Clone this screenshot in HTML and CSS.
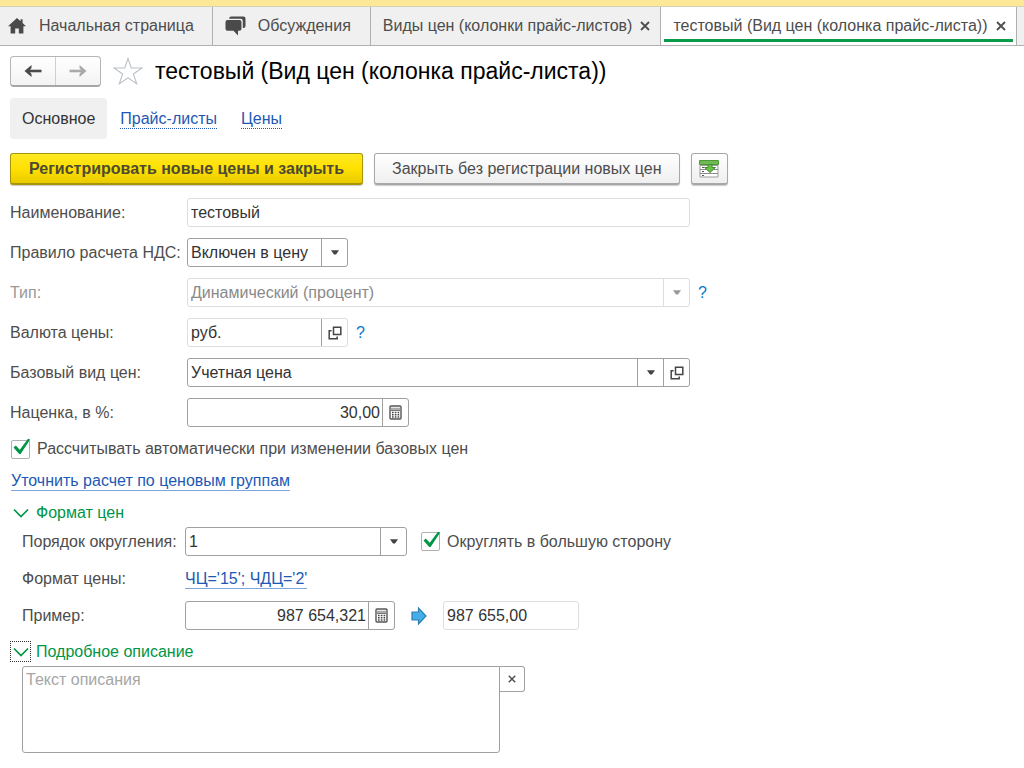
FILE: index.html
```html
<!DOCTYPE html>
<html lang="ru">
<head>
<meta charset="utf-8">
<title>тестовый (Вид цен (колонка прайс-листа))</title>
<meta name="viewport" content="width=device-width, initial-scale=1">
<link rel="stylesheet" href="styles.css">
</head>
<body>
<svg class="sprite" aria-hidden="true">
  <symbol id="i-down" viewBox="0 0 8 5"><path d="M0 0.300h8L5 4.500H3z" fill="currentColor"/></symbol>
  <symbol id="i-open" viewBox="0 0 14 14"><path d="M5.500 1.200h7.300v7.300H5.500zM3.600 4.800H1.200v8h8v-2.300" fill="none" stroke="currentColor" stroke-width="1.500"/></symbol>
  <symbol id="i-calc" viewBox="0 0 13 15"><rect x="1" y="1" width="11" height="13" rx="1" fill="#fff" stroke="#555" stroke-width="1.4"/><path d="M2 3.700h9" stroke="#aaa" stroke-width="2"/><path d="M2 5.300h9" stroke="#555"/><path d="M3 7.500h7.400M3 9.800h7.400M3 12h7.400" stroke="#444" stroke-width="1.400" stroke-dasharray="1.6 1.2"/></symbol>
  <symbol id="i-close" viewBox="0 0 10 10"><path d="M1 1l8 8M9 1L1 9" stroke="currentColor" stroke-width="1.8"/></symbol>
  <symbol id="i-chevron" viewBox="0 0 16 10"><path d="M1 1.5l7 7 7-7" fill="none" stroke="currentColor" stroke-width="1.7"/></symbol>
  <symbol id="i-tick" viewBox="0 0 19 19"><path d="M1.500 9.500l2.300-2 4 4.300L16 .8l2.200.7L8.600 16H7.200z" fill="#009646"/></symbol>
</svg>
<div class="strip"></div>
<nav class="tabs" aria-label="Открытые окна">
  <div class="tab tab-home"><svg width="18" height="16" viewBox="0 0 18 16"><path d="M9 0L0 8.2h2.6V15.5h4.6v-5h3.6v5h4.6V8.2H18L14.6 5V1.2h-2v2z" fill="#4a4a4a"/></svg><button type="button">Начальная страница</button></div>
  <div class="tab tab-talk"><svg width="21" height="20" viewBox="0 0 21 20"><path d="M6 0.5h12.500a2 2 0 0 1 2 2v7.500a2 2 0 0 1-2 2h-.7V5a2.200 2.200 0 0 0-2.200-2.200H4.200A2 2 0 0 1 6 .5z" fill="#4a4a4a"/><path d="M2.500 4h12a2 2 0 0 1 2 2v6.800a2 2 0 0 1-2 2h-1.500V19.500l-4.500-4.700H2.500a2 2 0 0 1-2-2V6a2 2 0 0 1 2-2z" fill="#4a4a4a"/></svg><button type="button">Обсуждения</button></div>
  <div class="tab tab-list"><button type="button">Виды цен (колонки прайс-листов)</button><button type="button" aria-label="Закрыть вкладку"><svg width="10" height="10"><use href="#i-close"/></svg></button></div>
  <div class="tab active"><button type="button">тестовый (Вид цен (колонка прайс-листа))</button><button type="button" aria-label="Закрыть вкладку"><svg width="10" height="10"><use href="#i-close"/></svg></button></div>
</nav>
<main class="page">
  <header class="heading">
    <div class="history">
      <button type="button" aria-label="Назад"><svg width="18" height="12" viewBox="0 0 18 12"><path d="M3 6h14.500" stroke="#4a4a4a" stroke-width="2.600"/><path d="M7.500 0L.5 6l7 6V9L5 6l2.500-3z" fill="#4a4a4a"/></svg></button>
      <button type="button" aria-label="Вперед"><svg width="18" height="12" viewBox="0 0 18 12"><path d="M15 6H.5" stroke="#a9a9a9" stroke-width="2.600"/><path d="M10.500 0l7 6-7 6V9L13 6l-2.500-3z" fill="#a9a9a9"/></svg></button>
    </div>
    <button type="button" class="star" aria-label="В избранное"><svg width="30" height="28" viewBox="0 0 30 28"><path d="M15 1.500l3.300 9.500H29l-8.600 6 3.300 9.800L15 20.800l-8.700 6L9.600 17 1 11h10.700z" fill="#fff" stroke="#b9c0c8" stroke-width="1.100"/></svg></button>
    <h1>тестовый (Вид цен (колонка прайс-листа))</h1>
  </header>
  <nav class="sections" aria-label="Разделы">
    <span class="current">Основное</span>
    <a href="#prices">Прайс-листы</a>
    <a href="#values">Цены</a>
  </nav>
  <div class="commands">
    <button type="button" class="btn primary">Регистрировать новые цены и закрыть</button>
    <button type="button" class="btn">Закрыть без регистрации новых цен</button>
    <button type="button" class="btn icon" aria-label="Загрузить"><svg width="20" height="18" viewBox="0 0 20 18"><path d="M1 5.500h18v11.500H1z" fill="#fff" stroke="#9a9a9a"/><path d="M1 9.500h18M1 13.500h18" stroke="#8c8c8c"/><path d="M3 7.500h2M3 11.500h2M3 15.500h2" stroke="#555"/><path d="M.5.500h19v4H.5z" fill="#6fb954" stroke="#4c9a36"/><path d="M9 4.500h4v3h3.500L11 12.500l-5.500-5H9z" fill="#6cc04a" stroke="#3f8f2c"/></svg></button>
  </div>
  <form class="form">
    <div class="row"><label for="name">Наименование:</label><div class="field wide soft"><input id="name" value="тестовый"></div></div>
    <div class="row"><label for="vat">Правило расчета НДС:</label><div class="field short"><select id="vat"><option>Включен в цену</option></select><span class="end"><svg width="8" height="5"><use href="#i-down"/></svg></span></div></div>
    <div class="row off"><label for="type">Тип:</label><div class="field wide soft"><select id="type" disabled><option>Динамический (процент)</option></select><span class="end"><svg width="8" height="5"><use href="#i-down"/></svg></span></div><button type="button" class="help">?</button></div>
    <div class="row"><label for="cur">Валюта цены:</label><div class="field short soft"><input id="cur" value="руб."><button type="button" class="end dark" aria-label="Открыть"><svg width="14" height="14"><use href="#i-open"/></svg></button></div><button type="button" class="help">?</button></div>
    <div class="row"><label for="base">Базовый вид цен:</label><div class="field wide"><select id="base"><option>Учетная цена</option></select><span class="end"><svg width="8" height="5"><use href="#i-down"/></svg></span><button type="button" class="end" aria-label="Открыть"><svg width="14" height="14"><use href="#i-open"/></svg></button></div></div>
    <div class="row"><label for="markup">Наценка, в %:</label><div class="field medium"><input id="markup" class="num" value="30,00"><button type="button" class="end" aria-label="Калькулятор"><svg width="13" height="15"><use href="#i-calc"/></svg></button></div></div>
    <label class="check"><input type="checkbox" checked><svg class="tick" width="19" height="19"><use href="#i-tick"/></svg>Рассчитывать автоматически при изменении базовых цен</label>
    <a class="link refine" href="#groups">Уточнить расчет по ценовым группам</a>
    <section>
      <h2><button type="button" class="toggle" aria-label="Свернуть"><svg width="16" height="10"><use href="#i-chevron"/></svg></button>Формат цен</h2>
      <div class="group">
        <div class="row"><label for="round">Порядок округления:</label><div class="field medium"><select id="round"><option>1</option></select><span class="end"><svg width="8" height="5"><use href="#i-down"/></svg></span></div><label class="check side"><input type="checkbox" checked><svg class="tick" width="19" height="19"><use href="#i-tick"/></svg>Округлять в большую сторону</label></div>
        <div class="row low"><span class="caption">Формат цены:</span><a class="link" href="#format">ЧЦ='15'; ЧДЦ='2'</a></div>
        <div class="row"><label for="sample">Пример:</label><div class="field sample"><input id="sample" class="num" value="987 654,321"><button type="button" class="end" aria-label="Калькулятор"><svg width="13" height="15"><use href="#i-calc"/></svg></button></div><svg class="becomes" width="16" height="18" viewBox="0 0 16 18"><path d="M1 5h6.500V1L15 9l-7.500 8v-4H1z" fill="#45aee8" stroke="#2b7fb5" stroke-width="1.200"/></svg><div class="field result soft"><input aria-label="Результат" value="987 655,00" readonly></div></div>
      </div>
    </section>
    <section>
      <h2><button type="button" class="toggle focused" aria-label="Свернуть"><svg width="16" height="10"><use href="#i-chevron"/></svg></button>Подробное описание</h2>
      <div class="group notes"><textarea aria-label="Подробное описание" placeholder="Текст описания"></textarea><button type="button" class="clear" aria-label="Очистить"><svg width="8" height="8"><use href="#i-close"/></svg></button></div>
    </section>
  </form>
</main>
</body>
</html>
```
FILE: styles.css
```css
* { box-sizing: border-box; }
body { margin: 0; background: #fff; color: #4d4d4d; font: 16px/20px "Liberation Sans", Arial, sans-serif; }
button, input, select, textarea { font: inherit; color: inherit; margin: 0; }
button { padding: 0; border: 0; background: none; white-space: nowrap; cursor: pointer; }
svg { display: block; flex: none; }
.sprite { position: absolute; width: 0; height: 0; }

.strip { height: 6px; background: #fce897; }
.tabs { display: flex; height: 40px; background: #f0f0f0; border-top: 1px solid #d6d0b8; border-bottom: 1px solid #b0b0b0; }
.tab { display: flex; align-items: center; flex: none; gap: 8px; border-right: 1px solid #b0b0b0; }
.tab-home { gap: 13px; padding: 0 18px 0 8px; }
.tab-talk { gap: 12px; padding: 0 19px 0 12px; }
.tab-list { padding: 0 10px 0 12px; }
.tab.active { position: relative; padding: 0 10px 1px 12px; gap: 9px; background: #fff; }
.tab.active::after { content: ""; position: absolute; left: 3px; right: 3px; bottom: 3px; height: 3px; background: #0a9b4b; }

.page { padding: 9px 10px; }
.heading { display: flex; align-items: center; height: 32px; }
.history { display: flex; width: 91px; height: 31px; border: 1px solid #b5b5b5; border-bottom: 2px solid #a6a6a6; border-radius: 4px; background: linear-gradient(#fff, #f3f3f3); }
.history button { flex: 1; display: grid; place-items: center; }
.history button + button { border-left: 1px solid #d0d0d0; }
.star { margin: 0 12px; }
h1 { margin: 0; font-size: 23px; line-height: 32px; font-weight: 400; color: #000; white-space: nowrap; }

.sections { display: flex; align-items: center; gap: 24px; margin-top: 11px; }
.sections .current { padding: 11px 12px 10px; margin-right: -11px; border-radius: 4px; background: #f0f0f0; color: #333; }
a { color: #1d59b4; text-decoration: none; }
.sections a { line-height: 18px; margin-top: 2px; border-bottom: 1px dotted #1d59b4; }

.commands { display: flex; gap: 11px; margin-top: 14px; }
.btn { height: 32px; padding: 0 17px; border: 1px solid #a8a8a8; border-bottom-width: 2px; border-radius: 3px; background: linear-gradient(#fff, #efefef); box-shadow: 0 1px 1px #ccc; }
.btn.primary { padding: 0 18px; border-color: #a89608; background: linear-gradient(#ffe926, #ffe000 50%, #e9cb00); font-weight: 700; color: #4d4a33; }
.btn.icon { width: 37px; padding: 0; display: grid; place-items: center; }

.form { margin-top: 13px; }
.row { display: flex; align-items: center; margin-bottom: 11px; }
.row > label:first-child, .caption { flex: none; width: 177px; white-space: nowrap; }
.off { color: #999; }
.field { display: flex; height: 29px; border: 1px solid #a0a0a0; border-radius: 3px; background: #fff; color: #333; }
.field.soft { border-color: #dedede; }
.off .field { color: #8a8a8a; }
.field input, .field select { flex: 1; min-width: 0; width: 100%; height: 27px; padding: 0 3px; border: 0; background: none; outline: 0; appearance: none; opacity: 1; }
.field .num { text-align: right; padding-right: 2px; }
.end { flex: none; width: 26px; display: grid; place-items: center; border-left: 1px solid #a0a0a0; color: #444; }
.soft .end { border-color: #dedede; }
.soft .end.dark { border-color: #a0a0a0; }
.off .end { color: #999; }
.wide { flex: 0 1 503px; }
.short { flex: 0 1 161px; }
.medium { flex: 0 1 222px; }
.sample { flex: 0 1 210px; }
.result { flex: 0 1 136px; }
.help { margin-left: 8px; color: #0878c8; }

.check { position: relative; display: flex; align-items: center; gap: 7px; width: max-content; margin: 0 1px; }
.check input { appearance: none; width: 19px; height: 19px; border: 1px solid #b0b0b0; border-radius: 2px; background: #fff; }
.tick { position: absolute; left: 1px; top: -1px; pointer-events: none; visibility: hidden; }
.check input:checked + .tick { visibility: visible; }
.form > .check { margin-top: 12px; margin-bottom: 13px; }
.check.side { margin-left: 14px; }
.link { line-height: 18px; border-bottom: 1px solid #7ea6dc; }
.refine { display: block; width: max-content; margin: 0 1px 11px; }

h2 { display: flex; align-items: center; gap: 5px; height: 21px; margin: 0 0 4px; font-size: 16px; font-weight: 400; color: #009646; }
.toggle { width: 21px; height: 21px; display: grid; place-items: center; }
.focused { outline: 1px dotted #333; outline-offset: -1px; }
.group { padding-left: 12px; }
.group .row > label:first-child, .group .caption { width: 163px; }
.group .low { margin: 13px 0 12px; }
.becomes { margin: 0 16px; }
.notes { display: flex; align-items: flex-start; }
textarea { display: block; flex: 0 1 478px; height: 87px; padding: 3px; border: 1px solid #a0a0a0; border-radius: 3px 0 3px 3px; resize: none; outline: 0; }
textarea::placeholder { color: #a6a6a6; }
.clear { width: 25px; height: 26px; display: grid; place-items: center; border: 1px solid #a0a0a0; border-left: 0; border-radius: 0 3px 3px 0; }
```
